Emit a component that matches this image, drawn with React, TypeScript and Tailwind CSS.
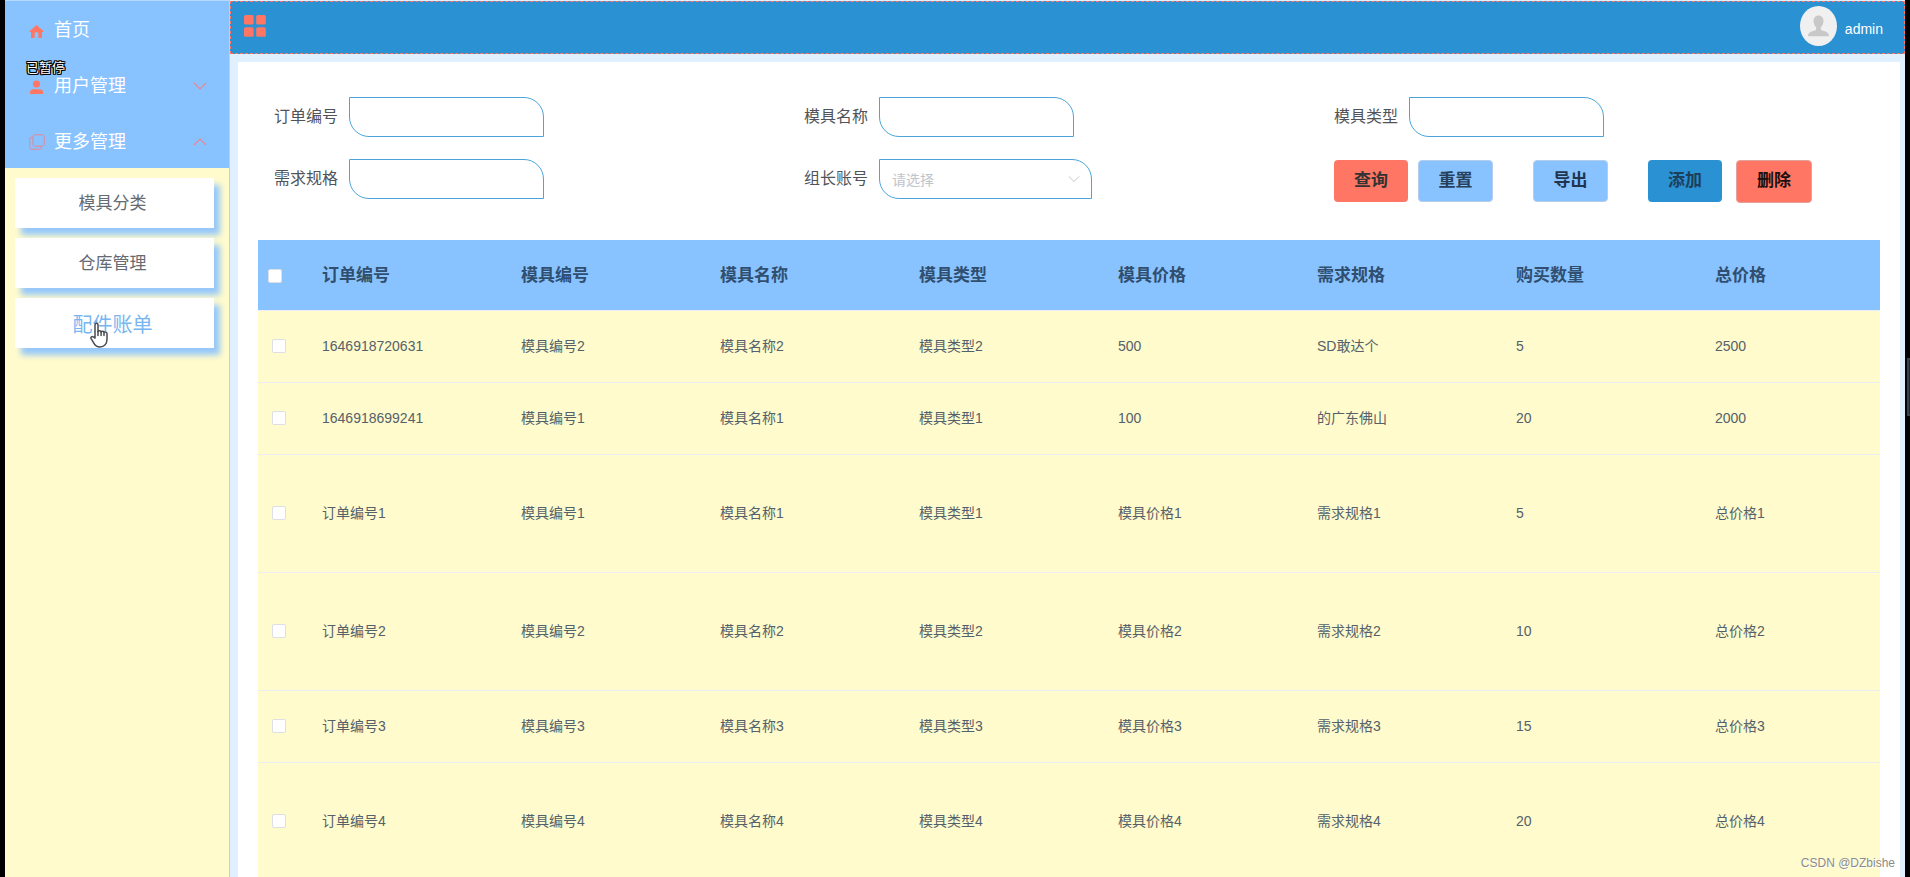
import { useState } from "react"

const columns = ["订单编号", "模具编号", "模具名称", "模具类型", "模具价格", "需求规格", "购买数量", "总价格"]

const orders = [
  { tall: false, cells: ["1646918720631", "模具编号2", "模具名称2", "模具类型2", "500", "SD敢达个", "5", "2500"] },
  { tall: false, cells: ["1646918699241", "模具编号1", "模具名称1", "模具类型1", "100", "的广东佛山", "20", "2000"] },
  { tall: true, cells: ["订单编号1", "模具编号1", "模具名称1", "模具类型1", "模具价格1", "需求规格1", "5", "总价格1"] },
  { tall: true, cells: ["订单编号2", "模具编号2", "模具名称2", "模具类型2", "模具价格2", "需求规格2", "10", "总价格2"] },
  { tall: false, cells: ["订单编号3", "模具编号3", "模具名称3", "模具类型3", "模具价格3", "需求规格3", "15", "总价格3"] },
  { tall: true, cells: ["订单编号4", "模具编号4", "模具名称4", "模具类型4", "模具价格4", "需求规格4", "20", "总价格4"] },
]

const fieldClass =
  "h-10 rounded-tr-[20px] rounded-bl-[20px] border border-[#4ba5d8] bg-white text-sm text-[#606266] outline-none"

const checkboxClass =
  "block h-3.5 w-3.5 appearance-none rounded-xs border border-[#dcdfe6] bg-white checked:bg-[#2a91d2]"

function HomeIcon() {
  return (
    <svg width="15" height="15" viewBox="0 0 15 15" fill="#ff7664">
      <path d="M7.5 1 14.3 7v1H13v6H9.4V9.8a1.9 1.9 0 0 0-3.8 0V14H2V8H.7V7z" />
    </svg>
  )
}

function UserIcon() {
  return (
    <svg width="15" height="15" viewBox="0 0 15 15" fill="#ff7664">
      <circle cx="7.5" cy="4" r="3.6" />
      <path d="M1 14v-1.5C1 10.4 2.4 9.3 4.4 9.3h6.2c2 0 3.4 1.1 3.4 3.2V14z" />
    </svg>
  )
}

function CopyIcon() {
  return (
    <svg width="16" height="16" viewBox="0 0 16 16" fill="none" stroke="#ea8590">
      <rect x="4" y="0.8" width="11.2" height="11.4" rx="1.8" />
      <path d="M3.9 3.4H2.4A1.6 1.6 0 0 0 .8 5v8.6a1.6 1.6 0 0 0 1.6 1.6h8.2a1.6 1.6 0 0 0 1.6-1.6v-1.3" />
    </svg>
  )
}

function Chevron({ up = false, color = "#ea8590", width = 14 }) {
  return (
    <svg width={width} height="8" viewBox="0 0 14 8" fill="none" stroke={color} strokeWidth="1.1">
      <path d={up ? "M1 7l6-6 6 6" : "M1 1l6 6 6-6"} />
    </svg>
  )
}

function Sidebar() {
  return (
    <aside className="w-[225px] shrink-0 border-r border-[#c3cfdc] bg-[#fffbcc]">
      <nav>
        <div className="border-t border-[#b5d9ff] bg-[#88c3ff] text-lg text-white">
          <a href="#home" className="flex h-[56px] items-center pt-0.5 pr-[22px] pl-6">
            <span className="flex w-[25px] pt-0.5">
              <HomeIcon />
            </span>
            首页
          </a>
          <button className="flex h-[56px] w-full items-center pt-0.5 pr-[22px] pl-6">
            <span className="flex w-[25px] pt-0.5">
              <UserIcon />
            </span>
            <span className="flex-1 text-left">用户管理</span>
            <Chevron />
          </button>
          <button className="flex h-[55px] w-full items-center pt-0.5 pr-[22px] pl-6">
            <span className="flex w-[25px]">
              <CopyIcon />
            </span>
            <span className="flex-1 text-left">更多管理</span>
            <Chevron up />
          </button>
        </div>
        <ul className="flex flex-col gap-2.5 pt-2.5 pr-[15px] pl-2.5 text-center text-[17px] text-[#666b73]">
          <li className="h-[50px] bg-white shadow-[6px_7px_6px_#97c8fa]">
            <a href="#types" className="flex h-full items-center justify-center pt-0.5 pr-1">模具分类</a>
          </li>
          <li className="h-[50px] bg-white shadow-[6px_7px_6px_#97c8fa]">
            <a href="#store" className="flex h-full items-center justify-center pt-0.5 pr-1">仓库管理</a>
          </li>
          <li className="h-[50px] bg-white shadow-[6px_7px_6px_#97c8fa]">
            <a href="#bills" className="flex h-full items-center justify-center pt-1 pr-1 text-xl text-[#79b6f0]">配件账单</a>
          </li>
        </ul>
      </nav>
    </aside>
  )
}

function Header() {
  return (
    <header className="flex h-[53px] shrink-0 items-center justify-between border border-dashed border-[#ff7664] bg-[#2a91d2] pr-[21px] pl-[13px]">
      <button aria-label="菜单" className="pb-1">
        <svg width="22" height="22" viewBox="0 0 22 22" fill="#ff7664">
          <rect width="9.6" height="9.6" rx="1.5" />
          <rect x="12.2" width="9.6" height="9.6" rx="1.5" />
          <rect y="12.2" width="9.6" height="9.6" rx="1.5" />
          <rect x="12.2" y="12.2" width="9.6" height="9.6" rx="1.5" />
        </svg>
      </button>
      <div className="flex items-center gap-2 pb-1 text-sm text-white">
        <svg width="37" height="40" viewBox="0 0 37 40">
          <ellipse cx="18.5" cy="20" rx="18.5" ry="20" fill="#f0f0f0" />
          <path
            d="M18.5 9.5c3.1 0 5 2.3 5 5.6 0 2.5-1.1 5-2.6 6.2v1.6c0 1 .5 1.3 1.5 1.7 3.3 1.1 6.6 1.9 6.6 5.7H8c0-3.8 3.3-4.6 6.6-5.7 1-.4 1.5-.7 1.5-1.7v-1.6c-1.5-1.2-2.6-3.7-2.6-6.2 0-3.3 1.9-5.600 5-5.600z"
            fill="#c8c8c8"
          />
        </svg>
        <span className="pt-1.5">admin</span>
      </div>
    </header>
  )
}

function TextField({ id, label }: { id: string; label: string }) {
  return (
    <div className="flex items-center gap-[11px]">
      <label htmlFor={id}>{label}</label>
      <input id={id} type="text" className={`${fieldClass} w-[195px] px-3`} />
    </div>
  )
}

function SearchForm() {
  return (
    <form
      className="grid grid-cols-3 items-start gap-y-[22px] px-4 text-base text-[#50545a]"
      onSubmit={(e) => e.preventDefault()}
    >
      <TextField id="orderNo" label="订单编号" />
      <TextField id="moldName" label="模具名称" />
      <TextField id="moldType" label="模具类型" />
      <TextField id="spec" label="需求规格" />
      <div className="flex items-center gap-[11px]">
        <label htmlFor="leader">组长账号</label>
        <div className="relative">
          <select id="leader" className={`${fieldClass} w-[213px] appearance-none px-3 pt-0.5 text-[#c0c4cc]`}>
            <option>请选择</option>
          </select>
          <span className="pointer-events-none absolute top-4 right-3">
            <Chevron color="#c0c4cc" width={12} />
          </span>
        </div>
      </div>
      <div className="flex h-11 items-center text-[17px] font-bold">
        <button className="mr-2.5 h-[42px] w-[74px] rounded-sm bg-[#ff7664] text-[#333]">查询</button>
        <button className="mr-10 h-[42px] w-[75px] rounded-sm border border-[#b4cdec] bg-[#88c3ff] text-[#26405c]">重置</button>
        <button className="mr-10 h-[42px] w-[75px] rounded-sm border border-[#b4cdec] bg-[#88c3ff] text-[#1f3550]">导出</button>
        <button className="mr-3.5 h-[42px] w-[74px] rounded-sm bg-[#2a91d2] text-[#1d3f5c]">添加</button>
        <button className="h-[43px] w-[76px] rounded-sm border border-[#e4a29c] bg-[#ff7664] text-[#1c0f0e]">删除</button>
      </div>
    </form>
  )
}

function OrderTable() {
  const [checked, setChecked] = useState<number[]>([])
  const allChecked = checked.length === orders.length

  const toggle = (i: number) =>
    setChecked(checked.includes(i) ? checked.filter((n) => n !== i) : [...checked, i])

  return (
    <table className="mt-[37px] w-full table-fixed border-collapse text-left">
      <colgroup>
        <col className="w-[54px]" />
        {columns.slice(1).map((name) => (
          <col key={name} className="w-[199px]" />
        ))}
        <col />
      </colgroup>
      <thead className="bg-[#88c3ff] text-[17px] text-[#304f70]">
        <tr className="h-[70px] border-b border-[#ebeef5]">
          <th className="pt-0.5 pl-2.5">
            <input
              type="checkbox"
              aria-label="全选"
              className={checkboxClass}
              checked={allChecked}
              onChange={() => setChecked(allChecked ? [] : orders.map((_, i) => i))}
            />
          </th>
          {columns.map((name) => (
            <th key={name} className="pt-0.5 pl-2.5 font-bold">{name}</th>
          ))}
        </tr>
      </thead>
      <tbody className="bg-[#fffbcc] text-sm text-[#55616a]">
        {orders.map((order, i) => (
          <tr key={i} className={`border-b border-[#ebeef5] ${order.tall ? "h-[118px]" : "h-[72px]"}`}>
            <td className="pl-3.5">
              <input
                type="checkbox"
                aria-label={`选择 ${order.cells[0]}`}
                className={checkboxClass}
                checked={checked.includes(i)}
                onChange={() => toggle(i)}
              />
            </td>
            {order.cells.map((cell, c) => (
              <td key={c} className="pl-2.5">{cell}</td>
            ))}
          </tr>
        ))}
      </tbody>
    </table>
  )
}

export default function App() {
  return (
    <div className="relative flex h-screen overflow-hidden bg-black px-[5px] font-['Liberation_Sans','Noto_Sans_CJK_SC',sans-serif]">
      <Sidebar />
      <div className="flex min-w-0 flex-1 flex-col bg-[#e0f0ff] pt-px">
        <Header />
        <main className="mt-2 mr-[5px] ml-2 flex-1 bg-white px-5 pt-[35px]">
          <SearchForm />
          <OrderTable />
        </main>
      </div>

      {/* Player status */}
      <span className="absolute top-[58px] left-[26px] text-[13px] leading-5 text-white [text-shadow:1px_0_#000,-1px_0_#000,0_1px_#000,0_-1px_#000,1px_1px_#000,-1px_-1px_#000,1px_-1px_#000,-1px_1px_#000]">
        已暂停
      </span>

      {/* Mouse pointer */}
      <svg className="absolute top-[322px] left-[90px]" width="18" height="26" viewBox="0 0 18 26" fill="#fff" stroke="#4a4a50" strokeWidth="1.5" strokeLinejoin="round" strokeLinecap="round">
        <path d="M5 16V2.8a1.5 1.5 0 0 1 3 0V9.5c.3-1 2.900-1 3.100.4.5-.9 2.700-.8 2.900.5.7-.7 3-.5 3 1.300V17c0 5-2.800 8-7 8-3.600 0-5.200-1.700-6.500-4.300L1 16.300c-.6-1.300 1-2.300 2.200-1.400z" />
        <path d="M8 9.5v4M11.1 9.900v3.600M14 10.400v3.100" fill="none" />
      </svg>

      {/* Drawer handle */}
      <div className="absolute top-[358px] right-0 h-[58px] w-[3px] border-2 border-r-0 border-[#3b4148] bg-[#1f252b]" />

      <span className="absolute right-[15px] bottom-1 text-xs leading-5 text-[#8b8b8b] [text-shadow:1px_1px_0_#fff]">
        CSDN @DZbishe
      </span>
    </div>
  )
}
